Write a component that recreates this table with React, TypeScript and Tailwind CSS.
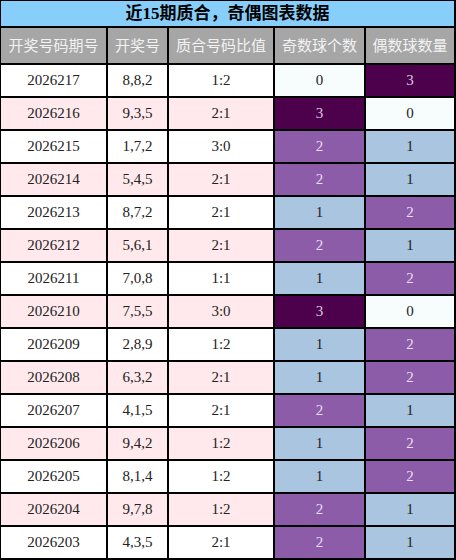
const rows: [string, string, string, number, number][] = [
  ["2026217", "8,8,2", "1:2", 0, 3],
  ["2026216", "9,3,5", "2:1", 3, 0],
  ["2026215", "1,7,2", "3:0", 2, 1],
  ["2026214", "5,4,5", "2:1", 2, 1],
  ["2026213", "8,7,2", "2:1", 1, 2],
  ["2026212", "5,6,1", "2:1", 2, 1],
  ["2026211", "7,0,8", "1:1", 1, 2],
  ["2026210", "7,5,5", "3:0", 3, 0],
  ["2026209", "2,8,9", "1:2", 1, 2],
  ["2026208", "6,3,2", "2:1", 1, 2],
  ["2026207", "4,1,5", "2:1", 2, 1],
  ["2026206", "9,4,2", "1:2", 1, 2],
  ["2026205", "8,1,4", "1:2", 1, 2],
  ["2026204", "9,7,8", "1:2", 2, 1],
  ["2026203", "4,3,5", "2:1", 2, 1],
];

// heat colours for counts 0..3
const heat: Record<number, string> = {
  0: "bg-[#f7fcfd] text-[#222]",
  1: "bg-[#a9c5df] text-[#222]",
  2: "bg-[#8c5ca9] text-[#e6def0]",
  3: "bg-[#4d004b] text-[#d9cce0]",
};

const cols = "grid grid-cols-[105px_59px_104px_89px_88px] gap-x-[2px]";
const headers = ["开奖号码期号", "开奖号", "质合号码比值", "奇数球个数", "偶数球数量"];

const App = () => {
  return (
    <div className="w-[456px] h-[560px] bg-black pt-px pl-px pr-[2px] flex flex-col gap-y-[2px] overflow-hidden">
      {/* Title */}
      <div className="h-[25px] bg-[#87cefa] flex items-center justify-center text-[17px] font-bold text-black font-['Liberation_Serif','Noto_Sans_CJK_SC',serif]">
        近15期质合，奇偶图表数据
      </div>

      {/* Header */}
      <div className={`${cols} h-[35px]`}>
        {headers.map((h) => (
          <div
            key={h}
            className="bg-[#a6a6a6] flex items-center justify-center text-[15px] text-[#f2f2f2] font-['Noto_Sans_CJK_SC',sans-serif]"
          >
            {h}
          </div>
        ))}
      </div>

      {/* Data */}
      {rows.map(([issue, nums, ratio, odd, even], i) => {
        const base = i % 2 === 1 ? "bg-[#ffe9ec]" : "bg-white";
        return (
          <div
            key={issue}
            className={`${cols} h-[31px] shrink-0 text-[15px] font-['Liberation_Serif',serif]`}
          >
            <div className={`${base} flex items-center justify-center text-[#222]`}>{issue}</div>
            <div className={`${base} flex items-center justify-center text-[#222]`}>{nums}</div>
            <div className={`${base} flex items-center justify-center text-[#222]`}>{ratio}</div>
            <div className={`${heat[odd]} flex items-center justify-center`}>{odd}</div>
            <div className={`${heat[even]} flex items-center justify-center`}>{even}</div>
          </div>
        );
      })}
    </div>
  );
};

export default App;
